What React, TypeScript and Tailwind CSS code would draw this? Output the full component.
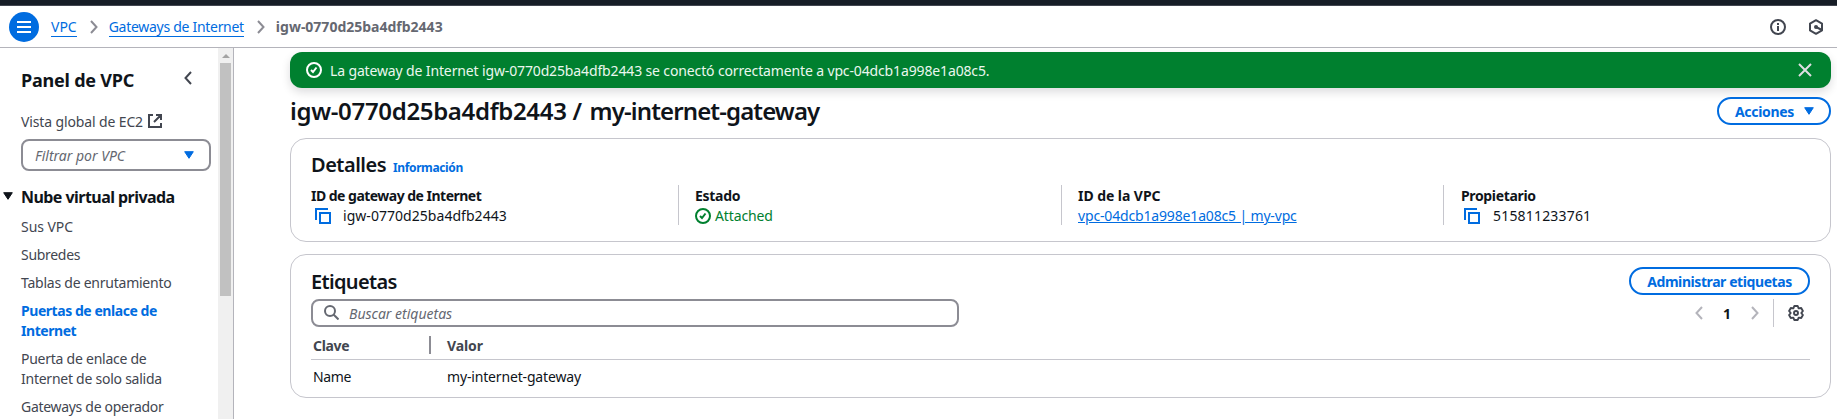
import type { ReactNode } from "react";

function CheckCircle({ className }: { className?: string }) {
  return (
    <svg viewBox="0 0 16 16" className={`size-4 shrink-0 ${className ?? ""}`} fill="none" stroke="currentColor" strokeWidth="2">
      <circle cx="8" cy="8" r="7" />
      <path d="m5 8 2 2 3.5-4.5" />
    </svg>
  );
}

function CopyIcon() {
  return (
    <svg viewBox="0 0 16 16" className="size-4 shrink-0 text-[#006ce0]" fill="none" stroke="currentColor" strokeWidth="2">
      <path d="M1 12V1h12" />
      <path d="M5 5h10v10H5z" />
    </svg>
  );
}

function Caret({ className }: { className?: string }) {
  return (
    <svg viewBox="0 0 10 8" className={`h-2 w-2.5 shrink-0 ${className ?? ""}`} fill="currentColor" stroke="currentColor" strokeLinejoin="round">
      <path d="M.7.7h8.6L5 7.3z" />
    </svg>
  );
}

function Chevron({ className, left }: { className?: string; left?: boolean }) {
  return (
    <svg viewBox="0 0 8 14" className={`h-3.5 w-2 shrink-0 ${className ?? ""}`} fill="none" stroke="currentColor" strokeWidth="2">
      <path d={left ? "M7 1 1.5 7 7 13" : "m1 1 5.5 6L1 13"} />
    </svg>
  );
}

function Field({ label, children, first }: { label: ReactNode; children: ReactNode; first?: boolean }) {
  return (
    <div className={first ? "h-10 pt-px" : "h-10 border-l border-[#c6c6cd] pt-px pl-4"}>
      <div className="font-bold">{label}</div>
      <div className="flex items-center">{children}</div>
    </div>
  );
}

function Sidebar() {
  return (
    <nav className="flex w-[234px] shrink-0 border-r border-[#b4b4bb] text-[#424650]">
      <div className="w-[218px] pt-[21px] pl-[21px]">
        <div className="flex h-[22px] items-center justify-between pr-[26px]">
          <h2 className="text-lg leading-[22px] font-bold tracking-[-0.22px] text-[#0f141a]">Panel de VPC</h2>
          <Chevron left className="-mt-1" />
        </div>
        <div className="mt-[21px] flex items-center gap-[5px]">
          <span className="tracking-[-0.13px]">Vista global de EC2</span>
          <svg viewBox="0 0 14 14" className="-mt-0.5 size-3.5" fill="none" stroke="currentColor" strokeWidth="2">
            <path d="M5 1H1v12h12V9M8 1h5v5M13 1 6 8" />
          </svg>
        </div>
        <div className="mt-[7px] flex h-8 w-[190px] items-center justify-between rounded-lg border-2 border-[#8c8c94] pr-[15px] pl-3 italic text-[#656871]">
          <span className="pt-0.5">Filtrar por VPC</span>
          <Caret className="text-[#006ce0]" />
        </div>
        <div className="mt-4 -ml-[18px] flex items-center gap-2 text-[#0f141a]">
          <Caret className="-mt-0.5" />
          <h3 className="text-base leading-5 font-bold tracking-[-0.55px]">Nube virtual privada</h3>
        </div>
        <ul className="mt-2.5 flex w-[170px] flex-col gap-2">
          <li className="tracking-[-0.05px]">Sus VPC</li>
          <li className="tracking-[-0.3px]">Subredes</li>
          <li className="tracking-[-0.24px]">Tablas de enrutamiento</li>
          <li className="font-bold tracking-[-0.45px] text-[#006ce0]">Puertas de enlace de<br />Internet</li>
          <li className="tracking-[-0.25px]">Puerta de enlace de<br />Internet de solo salida</li>
          <li className="tracking-[-0.3px]">Gateways de operador</li>
        </ul>
      </div>
      <div className="flex w-[15px] flex-col items-center bg-[#f0f0f0]">
        <svg viewBox="0 0 8 4" className="mt-1.5 h-1 w-2 shrink-0" fill="#a3a3a3">
          <path d="M0 4 4 0l4 4z" />
        </svg>
        <div className="mt-[5px] h-[233px] w-[11px] shrink-0 bg-[#c1c1c1]" />
      </div>
    </nav>
  );
}

export default function App() {
  return (
    <div className="flex h-[419px] w-full flex-col overflow-hidden bg-white font-['Noto_Sans',sans-serif] text-sm leading-5 text-[#0f141a]">
      <div className="h-1.5 shrink-0 border-b border-[#424650] bg-[#161d26]" />
      <header className="flex h-[42px] shrink-0 items-center border-b border-[#b4b4bb] pr-[13px] pl-[9px] text-[#424650]">
        <button className="flex size-[30px] items-center justify-center rounded-full bg-[#006ce0] text-white">
          <svg viewBox="0 0 14 12" className="h-3 w-3.5" fill="none" stroke="currentColor" strokeWidth="2">
            <path d="M0 1h14M0 6h14M0 11h14" />
          </svg>
        </button>
        <a className="mt-[2px] ml-3 border-b border-[#006ce0] leading-[18px] text-[#006ce0]">VPC</a>
        <Chevron className="ml-[13px] text-[#8c8c94]" />
        <a className="mt-[2px] ml-[11px] border-b border-[#006ce0] leading-[18px] tracking-[-0.29px] text-[#006ce0]">Gateways de Internet</a>
        <Chevron className="ml-[13px] text-[#8c8c94]" />
        <span className="ml-[11px] pt-px font-bold text-[#656871]">igw-0770d25ba4dfb2443</span>
        <div className="ml-auto flex gap-[22px]">
          <svg viewBox="0 0 16 16" className="size-4" fill="none" stroke="currentColor" strokeWidth="2">
            <circle cx="8" cy="8" r="7" />
            <path d="M8 4v2M8 7v5" />
          </svg>
          <svg viewBox="0 0 16 16" className="size-4" fill="none" stroke="currentColor" strokeWidth="2">
            <path d="M8 1.2 14 4.6v6.8L8 14.8 2 11.4V4.6z" strokeLinejoin="round" />
            <path d="m8 8 6 3" />
            <circle cx="8" cy="8" r="2" fill="currentColor" stroke="none" />
          </svg>
        </div>
      </header>

      <div className="flex min-h-0 flex-1">
        <Sidebar />
        <main className="flex min-w-0 flex-1 flex-col pt-1 pr-1.5 pl-14">
          <div className="flex h-9 shrink-0 items-center gap-2 rounded-xl bg-[#00802f] pr-[19px] pl-4 text-[#ebf7ee] shadow-[0_4px_10px_rgba(0,7,22,0.14)]">
            <CheckCircle className="text-white" />
            <span className="pt-px tracking-[-0.137px]">La gateway de Internet igw-0770d25ba4dfb2443 se conectó correctamente a vpc-04dcb1a998e1a08c5.</span>
            <svg viewBox="0 0 14 14" className="ml-auto size-3.5" fill="none" stroke="#dedee3" strokeWidth="2">
              <path d="m1 1 12 12M13 1 1 13" />
            </svg>
          </div>

          <div className="mt-2 flex h-[33px] shrink-0 items-start justify-between">
            <h1 className="text-2xl leading-[30px] font-semibold tracking-[-0.33px]">
              igw-0770d25ba4dfb2443 / <span className="ml-0.5 tracking-[-0.88px]">my-internet-gateway</span>
            </h1>
            <button className="mt-px flex h-7 w-[114px] items-center justify-between rounded-full border-2 border-[#006ce0] pr-[15px] pl-4 font-bold text-[#006ce0]">
              <span className="pt-px tracking-[-0.33px]">Acciones</span>
              <Caret />
            </button>
          </div>

          <section className="mt-[9px] h-[104px] shrink-0 rounded-2xl border border-[#c6c6cd] px-5 pt-3.5">
            <div className="flex items-baseline gap-[7px]">
              <h2 className="text-xl leading-6 font-semibold tracking-[-0.5px]">Detalles</h2>
              <a className="text-xs leading-4 font-bold tracking-[-0.38px] text-[#006ce0]">Información</a>
            </div>
            <div className="mt-2 grid grid-cols-[367px_383px_382px_1fr]">
              <Field first label={<span className="tracking-[-0.52px]">ID de gateway de Internet</span>}>
                <span className="mr-3 ml-1"><CopyIcon /></span><span className="tracking-[0.04px]">igw-0770d25ba4dfb2443</span>
              </Field>
              <Field label={<span className="tracking-[-0.3px]">Estado</span>}>
                <span className="flex items-center gap-1 tracking-[-0.13px] text-[#00802f]"><CheckCircle />Attached</span>
              </Field>
              <Field label={<span className="tracking-[-0.06px]">ID de la VPC</span>}>
                <a className="tracking-[-0.16px] text-[#006ce0] underline">vpc-04dcb1a998e1a08c5 | my-vpc</a>
              </Field>
              <Field label={<span className="ml-px tracking-[-0.35px]">Propietario</span>}>
                <span className="mr-[13px] ml-1"><CopyIcon /></span><span className="tracking-[0.18px]">515811233761</span>
              </Field>
            </div>
          </section>

          <section className="mt-3 h-36 shrink-0 rounded-2xl border border-[#c6c6cd] px-5 pt-3">
            <div className="flex h-7 items-center justify-between">
              <h2 className="pt-px text-xl leading-6 font-semibold tracking-[-0.65px]">Etiquetas</h2>
              <button className="flex h-7 w-[181px] items-center justify-center rounded-full border-2 border-[#006ce0] pt-px font-bold tracking-[-0.42px] text-[#006ce0]">Administrar etiquetas</button>
            </div>
            <div className="mt-1 flex h-7 items-center">
              <div className="flex h-7 w-[648px] items-center gap-[10px] rounded-lg border-2 border-[#8c8c94] pl-[11px] italic text-[#656871]">
                <svg viewBox="0 0 15 15" className="-mt-0.5 size-[15px]" fill="none" stroke="currentColor" strokeWidth="2">
                  <circle cx="6" cy="6" r="5" />
                  <path d="m9.5 9.5 5 5" />
                </svg>
                <span className="pt-0.5">Buscar etiquetas</span>
              </div>
              <div className="ml-auto flex h-7 items-center text-[#b4b4bb]">
                <Chevron left />
                <span className="w-12 pt-px text-center font-bold text-[#0f141a]">1</span>
                <Chevron />
                <div className="ml-3.5 h-7 w-px bg-[#c6c6cd]" />
                <svg viewBox="0 0 16 16" className="mr-1.5 ml-3.5 size-4 text-[#424650]" fill="none" stroke="currentColor" strokeWidth="1.9" strokeLinejoin="round">
                  <path d="M6.3 1h3.4l.95 2.4 2.55-.4 1.7 3-1.6 2 1.6 2-1.7 3-2.55-.4L9.7 15H6.3l-.95-2.4-2.55.4-1.7-3 1.6-2-1.6-2 1.7-3 2.55.4z" />
                  <circle cx="8" cy="8" r="2" />
                </svg>
              </div>
            </div>
            <div className="mt-2 grid h-[25px] grid-cols-[120px_1fr] border-b border-[#c6c6cd] font-bold text-[#424650]">
              <div className="flex h-5 items-center justify-between pl-0.5">
                <span className="pt-0.5 tracking-[-0.35px]">Clave</span>
                <span className="h-[18px] w-0.5 bg-[#8c8c94]" />
              </div>
              <div className="pt-px pl-4 tracking-[-0.1px]">Valor</div>
            </div>
            <div className="mt-[7px] grid grid-cols-[120px_1fr]">
              <div className="pl-0.5 tracking-[-0.37px]">Name</div>
              <div className="pl-4 tracking-[-0.16px]">my-internet-gateway</div>
            </div>
          </section>
        </main>
      </div>
    </div>
  );
}
